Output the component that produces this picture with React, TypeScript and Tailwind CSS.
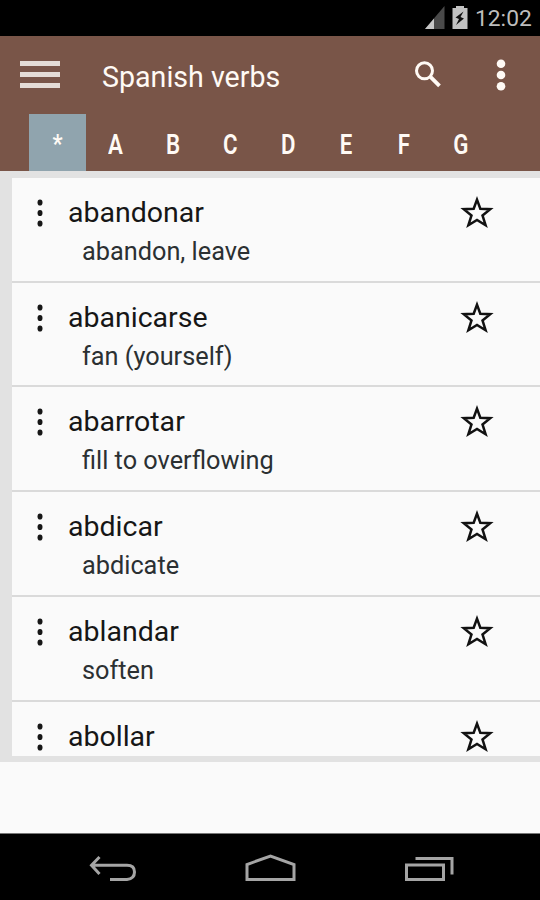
import { useState } from 'react'

const letters = ['*', 'A', 'B', 'C', 'D', 'E', 'F', 'G']

const verbs = [
  { verb: 'abandonar', meaning: 'abandon, leave' },
  { verb: 'abanicarse', meaning: 'fan (yourself)' },
  { verb: 'abarrotar', meaning: 'fill to overflowing' },
  { verb: 'abdicar', meaning: 'abdicate' },
  { verb: 'ablandar', meaning: 'soften' },
  { verb: 'abollar', meaning: '' },
]

function StatusBar() {
  return (
    <div className="flex h-9 shrink-0 items-start justify-end bg-black pr-2 text-[#bdbdbd]">
      <svg className="mt-[5px] mr-[7px]" width="20" height="24" viewBox="0 0 20 24">
        <path d="M0 24 19.500 1V24Z" fill="#4a4a4a" />
        <path d="M0 24 9 13.500V24Z" fill="#c6c6c6" />
      </svg>
      <svg className="mt-[5px] mr-[7px]" width="16" height="24" viewBox="0 0 16 24">
        <path d="M0.500 3H4V1H12V3H15.500V24H0.500Z" fill="#c2c2c2" />
        <path d="M11.500 6.500 3.500 12.500 7 14 4 20 12 13.500 8.500 12Z" fill="#111" />
      </svg>
      <span className="mt-[6px] mr-px w-[56px] text-right text-[22.800px] leading-[26px]">12:02</span>
    </div>
  )
}

function Header() {
  return (
    <div className="flex h-[78px] shrink-0 items-start text-[#fffaf5]">
      <button className="mt-[25px] ml-5 flex w-10 flex-col gap-[6px]" aria-label="Menu">
        <span className="h-[5px] w-full bg-[#e5dcd6]" />
        <span className="h-[5px] w-full bg-[#e5dcd6]" />
        <span className="h-[5px] w-full bg-[#e5dcd6]" />
      </button>
      <h1 className="mt-[25px] ml-[42px] text-[28.600px] leading-[33px] font-normal">Spanish verbs</h1>
      <button className="mt-[25px] mr-[55px] ml-auto" aria-label="Search">
        <svg width="26" height="27" viewBox="0 0 26 27" fill="none" stroke="currentColor">
          <circle cx="9.500" cy="9.800" r="8" strokeWidth="3" />
          <path d="M15.500 15.800 24.500 24.800" strokeWidth="3.800" />
        </svg>
      </button>
      <button className="mt-[23px] mr-[34px]" aria-label="More">
        <svg width="10" height="32" viewBox="0 0 10 32" fill="currentColor">
          <circle cx="5" cy="4.800" r="4.300" />
          <circle cx="5" cy="16" r="4.300" />
          <circle cx="5" cy="27.200" r="4.300" />
        </svg>
      </button>
    </div>
  )
}

function Row({ verb, meaning }: { verb: string; meaning: string }) {
  return (
    <div className="flex h-[104.850px] shrink-0 items-start border-b-2 border-[#dadada]">
      <svg className="mt-[20px] ml-[25px] shrink-0" width="6" height="30" viewBox="0 0 6 30">
        <ellipse cx="3" cy="4.500" rx="2.500" ry="3.100" fill="#161616" />
        <ellipse cx="3" cy="15" rx="2.500" ry="3.100" fill="#161616" />
        <ellipse cx="3" cy="25.500" rx="2.500" ry="3.100" fill="#161616" />
      </svg>
      <div className="mt-[18px] ml-[25.500px]">
        <p className="text-[28.500px] leading-[34px] text-[#161616]">{verb}</p>
        <p className="mt-[6px] ml-[14px] text-[25.300px] leading-[32px] text-[#2b3032]">{meaning}</p>
      </div>
      <svg className="mt-[17px] mr-[46px] ml-auto" width="34" height="34" viewBox="0 0 34 34" fill="none" stroke="#111" strokeWidth="2.500">
        <path d="M17 4.600 20.300 13.700 30.300 14.200 22.500 20.500 25.600 30.200 17 25 8.400 30.200 11.500 20.500 3.700 14.200 13.700 13.700Z" />
      </svg>
    </div>
  )
}

function NavBar() {
  return (
    <div className="h-[67px] shrink-0 border-t border-[#777] bg-black">
      <svg width="540" height="66" viewBox="0 0 540 66" fill="none" stroke="#a5a5a5" strokeWidth="3">
        <path d="M99.500 23 91.500 31.300 99.500 40M92 31.300H127Q134.500 31.300 134.500 38T127 45.500H110" />
        <path d="M247 45.500V30.500L270.500 22 294 30.500V45.500Z" />
        <path d="M406.500 31H443.500V45.500H406.500ZM415.500 24.500H452V40.500" />
      </svg>
    </div>
  )
}

export default function App() {
  const [letter, setLetter] = useState('*')

  return (
    <div className="flex h-[900px] w-[540px] flex-col overflow-hidden bg-[#fafafa] font-['Roboto',sans-serif]">
      <StatusBar />
      <div className="h-[135px] shrink-0 bg-[#795548]">
        <Header />
        <div className="flex pl-[28.500px]">
          {letters.map((item) => (
            <button
              key={item}
              className={`flex h-[57px] w-[57.700px] items-start justify-center pt-[14px] text-[28.500px] leading-[33px] font-semibold text-[#fffaf5] ${item === letter ? 'bg-[#90a4ae]' : ''}`}
              onClick={() => setLetter(item)}
            >
              <span className={item === '*' ? 'text-[25px] scale-x-[0.900]' : 'scale-x-[0.780]'}>{item}</span>
            </button>
          ))}
        </div>
      </div>
      <div className="flex h-[591px] shrink-0 flex-col bg-[#e2e2e2] pt-[6.800px] pb-[6px] pl-[11.500px]">
        <div className="flex min-h-0 flex-1 flex-col overflow-hidden bg-[#fafafa]">
          {verbs.map((item) => (
            <Row key={item.verb} verb={item.verb} meaning={item.meaning} />
          ))}
        </div>
      </div>
      <div className="flex-1" />
      <NavBar />
    </div>
  )
}
